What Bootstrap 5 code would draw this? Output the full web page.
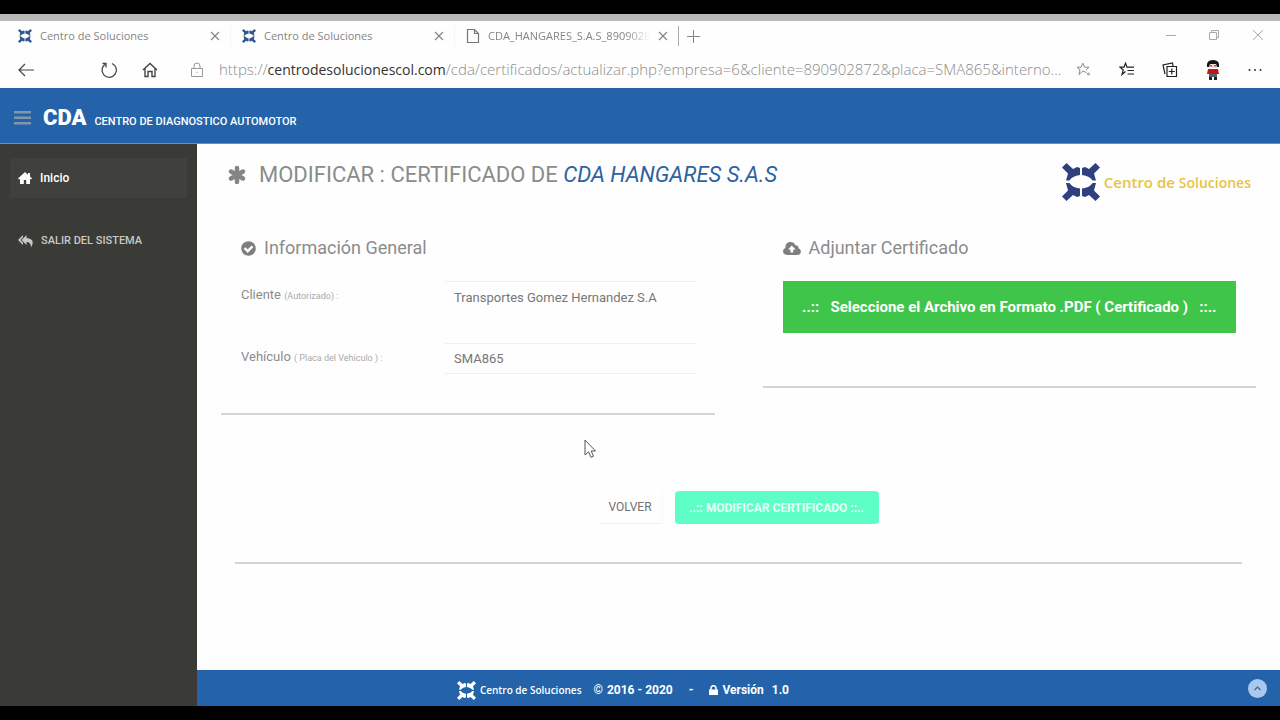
<!DOCTYPE html>
<html lang="es">
<head>
<meta charset="utf-8">
<meta name="viewport" content="width=device-width, initial-scale=1">
<title>Centro de Soluciones</title>
<link href="https://cdn.jsdelivr.net/npm/bootstrap@5.3.0/dist/css/bootstrap.min.css" rel="stylesheet">
<style>
  body { font-family: Roboto, "Liberation Sans", sans-serif; font-size: 14px; line-height: 20px; color: #8a8c8c; background: #fefefe; }
  svg { display: block; flex: none; }
  button { font-family: inherit; }
  .edge { height: 14px; background: #000; }
  .desk-strip { height: 7px; background: #b8b8b8; }

  /* browser chrome */
  .chrome { font-family: "Open Sans", "Noto Sans", sans-serif; color: #858585; background: #fefefe; }
  .tab-strip { height: 30px; font-size: 11px; padding-left: 7px; }
  .tab-item { width: 224px; padding: 0 10px 0 11px; border-right: 1px solid #f4f4f4; }
  .tab-item.last-tab { border-right-color: #aaa; height: 20px; }
  .tab-title { color: #858585; text-decoration: none; white-space: nowrap; }
  .tab-title.fading { -webkit-mask-image: linear-gradient(90deg, #000 85%, transparent); mask-image: linear-gradient(90deg, #000 85%, transparent); }
  .plain-btn { border: 0; background: none; padding: 0; color: inherit; display: flex; align-items: center; }
  .win-btns { gap: 33px; padding: 0 16px 2px 0; color: #aaa; }
  .address-bar { height: 37px; color: #444; padding: 0 18px; }
  .nav-btns { gap: 24px; margin-left: 66px; margin-right: 33px; }
  .tool-btns { gap: 27px; }
  .address { font-size: 15px; font-weight: 300; color: #8c8c8c; white-space: nowrap; }
  .address b { font-size: 14px; font-weight: 400; color: #333; }

  /* application header and sidebar */
  .app-header { height: 56px; background: #2463aa; border-bottom: 1px solid #6f8fae; color: #fff; padding: 4px 14px 0; }
  .brand-big { font-size: 22px; font-weight: 900; line-height: 28px; color: #fff; text-decoration: none; }
  .brand-text { font-size: 11px; font-weight: 500; }
  .app-side { width: 197px; background: #3a3b36; padding: 14px 10px; }
  .side-link { height: 40px; padding: 0 8px; gap: 8px; color: #c8c9c6; text-decoration: none; font-size: 11px; font-weight: 500; }
  .side-link.current { background: #40413c; color: #fff; font-size: 12px; margin-bottom: 23px; }

  /* form */
  .page-title { font-size: 22px; line-height: 30px; font-weight: 400; margin: 0; color: #8a8c8c; }
  .page-title em { color: #2d62a0; }
  .page-top { padding: 16px 29px 0 30px; height: 89px; }
  .site-logo { font-family: "Open Sans", sans-serif; font-weight: 600; font-size: 15px; color: #e9c342; padding-top: 3px; }
  .site-logo small { font-size: 14px; }
  .panel-body { padding: 0 20px; }
  .panel-title { font-size: 18px; line-height: 30px; font-weight: 400; margin: 0 0 18px; color: #8a8c8c; }
  .panel-rule { height: 2px; background: #d3d4da; }
  .rule-left { margin-top: 39px; }
  .rule-right { margin-top: 53px; }
  .field-row { margin-bottom: 31px; }
  .field-label { width: 45%; font-size: 13px; line-height: 28px; color: #8a8c8c; }
  .field-label small { font-size: 9px; color: #aaa; }
  .field-box { border: 0; border-top: 1px solid #eee; border-radius: 0; height: 31px; padding: 0 9px; font-size: 13px; color: #777; background: none; }
  .field-box.closed { border-bottom: 1px solid #eee; }
  .pick-btn { height: 52px; border: 0; border-radius: 0; background: #3fc549; color: #fff; font-size: 15px; font-weight: 700; white-space: pre; }
  .actions { padding: 76px 0 38px; gap: 12px; }
  .back-btn { height: 33px; width: 64px; border: 0; border-bottom: 1px solid #f1f1f1; border-right: 1px solid #f8f8f8; background: none; font-size: 12px; color: #6f7173; padding: 0; }
  .save-btn { height: 33px; width: 204px; border: 0; border-radius: 4px; background: #5effc6; color: #e8fff5; font-size: 12px; font-weight: 700; padding: 0; }
  .wide-rule { margin: 0 38px; }

  .app-footer { height: 36px; background: #2463aa; color: #fff; font-size: 12px; font-weight: 700; padding: 4px 0 0 24%; }
  .foot-logo { font-family: "Open Sans", sans-serif; font-size: 10px; font-weight: 600; }
  .top-btn { position: absolute; right: 13px; top: 9px; width: 19px; height: 19px; border-radius: 50%; border: 0; padding: 0; background: #a9c8ee; display: flex; align-items: center; justify-content: center; }
  .pointer { position: absolute; left: 584px; top: 439px; }
</style>
</head>
<body class="d-flex flex-column min-vh-100 position-relative">
<svg width="0" height="0" class="position-absolute" aria-hidden="true">
  <symbol id="arms" viewBox="0 0 38 38">
    <path d="M4.500 0 0 4.500 6 10.500 4 17.500H7.500Q10 13 18 12V5L15 4 11 6Z"/>
    <path d="M33.500 0 38 4.500 32 10.500 34 17.500H30.500Q28 13 20 12V5L23 4 27 6Z"/>
    <path d="M4.500 38 0 33.500 6 27.500 4 20H7.500Q10 24.500 18 25.500V33L15 34 11 32Z"/>
    <path d="M33.500 38 38 33.500 32 27.500 34 20H30.500Q28 24.500 20 25.500V33L23 34 27 32Z"/>
  </symbol>
  <symbol id="cross" viewBox="0 0 10 10"><path d="M1 1 9 9M9 1 1 9" fill="none" stroke="currentColor" stroke-width="1.2"/></symbol>
</svg>

<div class="edge"></div>
<div class="desk-strip"></div>

<header class="chrome">
  <div class="tab-strip d-flex align-items-center">
    <div class="tab-item d-flex align-items-center">
      <svg width="14" height="14" fill="#2d5592"><use href="#arms"/></svg>
      <a class="tab-title ms-2" href="#">Centro de Soluciones</a>
      <button class="plain-btn ms-auto" aria-label="Cerrar"><svg width="10" height="10"><use href="#cross"/></svg></button>
    </div>
    <div class="tab-item d-flex align-items-center">
      <svg width="14" height="14" fill="#2d5592"><use href="#arms"/></svg>
      <a class="tab-title ms-2" href="#">Centro de Soluciones</a>
      <button class="plain-btn ms-auto" aria-label="Cerrar"><svg width="10" height="10"><use href="#cross"/></svg></button>
    </div>
    <div class="tab-item last-tab d-flex align-items-center">
      <svg width="14" height="16" fill="none" stroke="#777" stroke-width="1.200"><path d="M1.500 1.500H8.500L12.500 5.500V14.500H1.500ZM8.500 1.500V5.500H12.500"/></svg>
      <a class="tab-title fading ms-2" href="#">CDA_HANGARES_S.A.S_8909028</a>
      <button class="plain-btn ms-auto" aria-label="Cerrar"><svg width="10" height="10"><use href="#cross"/></svg></button>
    </div>
    <button class="plain-btn ms-2" aria-label="Nueva pestaña"><svg width="13" height="13" stroke="currentColor"><path d="M6.500 0V13M0 6.500H13"/></svg></button>
    <div class="win-btns d-flex align-items-center ms-auto">
      <button class="plain-btn" aria-label="Minimizar"><svg width="10" height="10" stroke="currentColor"><path d="M0 5.500H10"/></svg></button>
      <button class="plain-btn" aria-label="Restaurar"><svg width="10" height="10" fill="none" stroke="currentColor"><path d="M.5 2.500H7.500V9.500H.5ZM2.500 2.500V.5H9.500V7.500H7.500"/></svg></button>
      <button class="plain-btn" aria-label="Cerrar ventana"><svg width="12" height="12" stroke="currentColor"><path d="M1 1 11 11M11 1 1 11"/></svg></button>
    </div>
  </div>
  <div class="address-bar d-flex align-items-center">
    <button class="plain-btn" aria-label="Atrás"><svg width="16" height="14" fill="none" stroke="currentColor" stroke-width="1.200"><path d="M16 7H1M7 1 1 7 7 13"/></svg></button>
    <div class="nav-btns d-flex align-items-center">
      <button class="plain-btn" aria-label="Actualizar"><svg width="18" height="18" fill="none" stroke="currentColor" stroke-width="1.300"><path d="M5.500 3A7.200 7.200 0 1 0 12 2.500"/><path d="M2.500 2.500H6V6.500"/></svg></button>
      <button class="plain-btn" aria-label="Inicio"><svg width="16" height="16" fill="none" stroke="currentColor" stroke-width="1.400"><path d="M1 8 8 1.500 15 8M3 6.500V14.500H6V9.500H10V14.500H13V6.500"/></svg></button>
    </div>
    <svg width="12" height="16" fill="none" stroke="#999"><path d="M.5 6.500H11.500V14.500H.5ZM3 6.500V4A3 3 0 0 1 9 4V6.500"/><path d="M5.500 10.500H6.500"/></svg>
    <span class="address ms-3">https://<b>centrodesolucionescol.com</b>/cda/certificados/actualizar.php?empresa=6&amp;cliente=890902872&amp;placa=SMA865&amp;interno...</span>
    <div class="tool-btns d-flex align-items-center ms-auto">
      <button class="plain-btn" aria-label="Agregar a favoritos"><svg width="16" height="15" fill="none" stroke="#888"><path d="M10.500 10.500 6.800 9 3 12.500 4 8 1 5.200H5L6.800 1.200 8.600 5.200H13L10 8"/><circle cx="12.500" cy="12" r="1"/></svg></button>
      <button class="plain-btn" aria-label="Favoritos"><svg width="16" height="15" fill="none" stroke="#222" stroke-width="1.200"><path d="M6.500 9.500 3 12.500 4.200 8 1 5.200H5L6.500 1.200 8 5.200H15M8.500 8.500H15M8.500 12H15"/></svg></button>
      <button class="plain-btn" aria-label="Colecciones"><svg width="16" height="16" fill="none" stroke="#222" stroke-width="1.200"><path d="M5 4.500H14.500V14.500H5ZM9.800 6.500V12.500M6.800 9.500H12.800M3 12 1 3 10.500 1 11 4"/></svg></button>
      <button class="plain-btn" aria-label="Perfil"><svg width="16" height="22"><path d="M4 4H12V9H4Z" fill="#f3d9cd"/><path d="M2 8Q1 1 8 1T14 8L12 8 11 5H5L4 8Z" fill="#151515"/><path d="M3 10H13L14 15H2Z" fill="#c5161d"/><path d="M4 15H12V18H4Z" fill="#4d6675"/><path d="M4 18H7V21H4ZM9 18H12V21H9Z" fill="#222"/><path d="M6 6V7.500M10 6V7.500" stroke="#111"/></svg></button>
      <button class="plain-btn" aria-label="Más"><svg width="14" height="4" fill="#333"><circle cx="1.500" cy="2" r="1"/><circle cx="7" cy="2" r="1"/><circle cx="12.500" cy="2" r="1"/></svg></button>
    </div>
  </div>
</header>

<div class="app-header d-flex align-items-center">
  <button class="plain-btn" aria-label="Menú"><svg width="17" height="14" fill="#8395a8"><path d="M0 0H17V2.500H0ZM0 5.500H17V8H0ZM0 11H17V13.500H0Z"/></svg></button>
  <div class="d-flex align-items-baseline ms-2 ps-1">
    <a class="brand-big" href="#">CDA</a>
    <span class="brand-text ms-2">CENTRO DE DIAGNOSTICO AUTOMOTOR</span>
  </div>
</div>

<div class="d-flex flex-grow-1">
  <nav class="app-side flex-shrink-0">
    <a class="side-link current d-flex align-items-center" href="#"><svg width="14" height="12" fill="#fff"><path d="M7 0 0 6.500 1 7.500 2 6.700V12H5.800V8H8.200V12H12V6.700L13 7.500 14 6.500 12 4.600V1H10V2.700Z"/></svg>Inicio</a>
    <a class="side-link d-flex align-items-center" href="#"><svg width="15" height="13" fill="#c8c9c6"><path d="M5 0 0 5 5 10V7.700L2.500 5 5 2.300Z"/><path d="M8.500 0 3.500 5 8.500 10V7Q13 7 13 12.500 18 4 8.500 3Z"/></svg>SALIR DEL SISTEMA</a>
  </nav>

  <div class="flex-grow-1 d-flex flex-column">
    <main class="flex-grow-1">
      <div class="page-top d-flex justify-content-between align-items-start">
        <h1 class="page-title d-flex align-items-center">
          <svg width="20" height="20" stroke="#858585" stroke-width="4.500" stroke-linecap="round"><path d="M10 3V17M4 6.500 16 13.500M16 6.500 4 13.500"/></svg>
          <span class="ms-2 ps-1">MODIFICAR : CERTIFICADO DE <em>CDA HANGARES S.A.S</em></span>
        </h1>
        <div class="site-logo d-flex align-items-center gap-1">
          <svg width="38" height="38" fill="#2f4080"><use href="#arms"/></svg>
          <span>Centro de <small>Soluciones</small></span>
        </div>
      </div>

      <form>
        <div class="row g-0">
          <section class="col-6 px-4">
            <div class="panel-body">
              <h2 class="panel-title d-flex align-items-center gap-2"><svg width="15" height="15"><circle cx="7.500" cy="7.500" r="7.300" fill="#7d7f7f"/><path d="M3.500 7 6.700 10.200 11.500 5.300" fill="none" stroke="#fff" stroke-width="2.400"/></svg>Información General</h2>
              <div class="field-row d-flex align-items-start">
                <label class="field-label" for="cliente">Cliente <small>(Autorizado) :</small></label>
                <input class="field-box flex-grow-1" id="cliente" value="Transportes Gomez Hernandez S.A">
              </div>
              <div class="d-flex align-items-start">
                <label class="field-label" for="placa">Vehículo <small>( Placa del Vehículo ) :</small></label>
                <input class="field-box closed flex-grow-1" id="placa" value="SMA865">
              </div>
            </div>
            <div class="panel-rule rule-left"></div>
          </section>
          <section class="col-6 px-4">
            <div class="panel-body">
              <h2 class="panel-title d-flex align-items-center gap-2"><svg width="18" height="15"><path d="M4 14Q0 13.500 0 10.300 0 7.800 2.400 6.900 2.200 1 7.500 1 11 1 12.200 4.200 15.500 4 15.500 7.300 18 8.200 17.900 10.700 17.500 14 14 14Z" fill="#7d7f7f"/><path d="M8.800 4.500 5 8.500H7.500V11.500H10.200V8.500H12.700Z" fill="#fff"/></svg>Adjuntar Certificado</h2>
              <button type="button" class="pick-btn w-100">..::   Seleccione el Archivo en Formato .PDF ( Certificado )   ::..</button>
            </div>
            <div class="panel-rule rule-right"></div>
          </section>
        </div>
        <div class="actions d-flex justify-content-center">
          <button type="button" class="back-btn">VOLVER</button>
          <button type="submit" class="save-btn">..:: MODIFICAR CERTIFICADO ::..</button>
        </div>
        <div class="panel-rule wide-rule"></div>
      </form>
    </main>

    <footer class="app-footer d-flex align-items-center position-relative">
      <svg width="19" height="19" fill="#fff"><use href="#arms"/></svg>
      <span class="foot-logo ms-1">Centro de Soluciones</span>
      <span class="ms-2 ps-1">©</span><span class="ms-1">2016 - 2020</span>
      <span class="mx-3">-</span>
      <svg width="9" height="10"><path d="M0 4.500H9V10H0Z" fill="#fff"/><path d="M2 5V3A2.500 2.300 0 0 1 7 3V5" fill="none" stroke="#fff" stroke-width="1.500"/></svg>
      <span class="ms-1">Versión</span><span class="ms-2">1.0</span>
      <button class="top-btn" aria-label="Subir"><svg width="7" height="5" fill="none" stroke="#49627f" stroke-width="1.200"><path d="M.5 4 3.500 1 6.500 4"/></svg></button>
    </footer>
  </div>
</div>
<div class="edge"></div>

<svg class="pointer" width="12" height="20" fill="#fff" stroke="#555"><path d="M1 1V16L4.500 12.800 7 18.300 9.500 17.200 7.200 12H11.500Z"/></svg>
<script src="https://cdn.jsdelivr.net/npm/bootstrap@5.3.0/dist/js/bootstrap.bundle.min.js"></script>
</body>
</html>
